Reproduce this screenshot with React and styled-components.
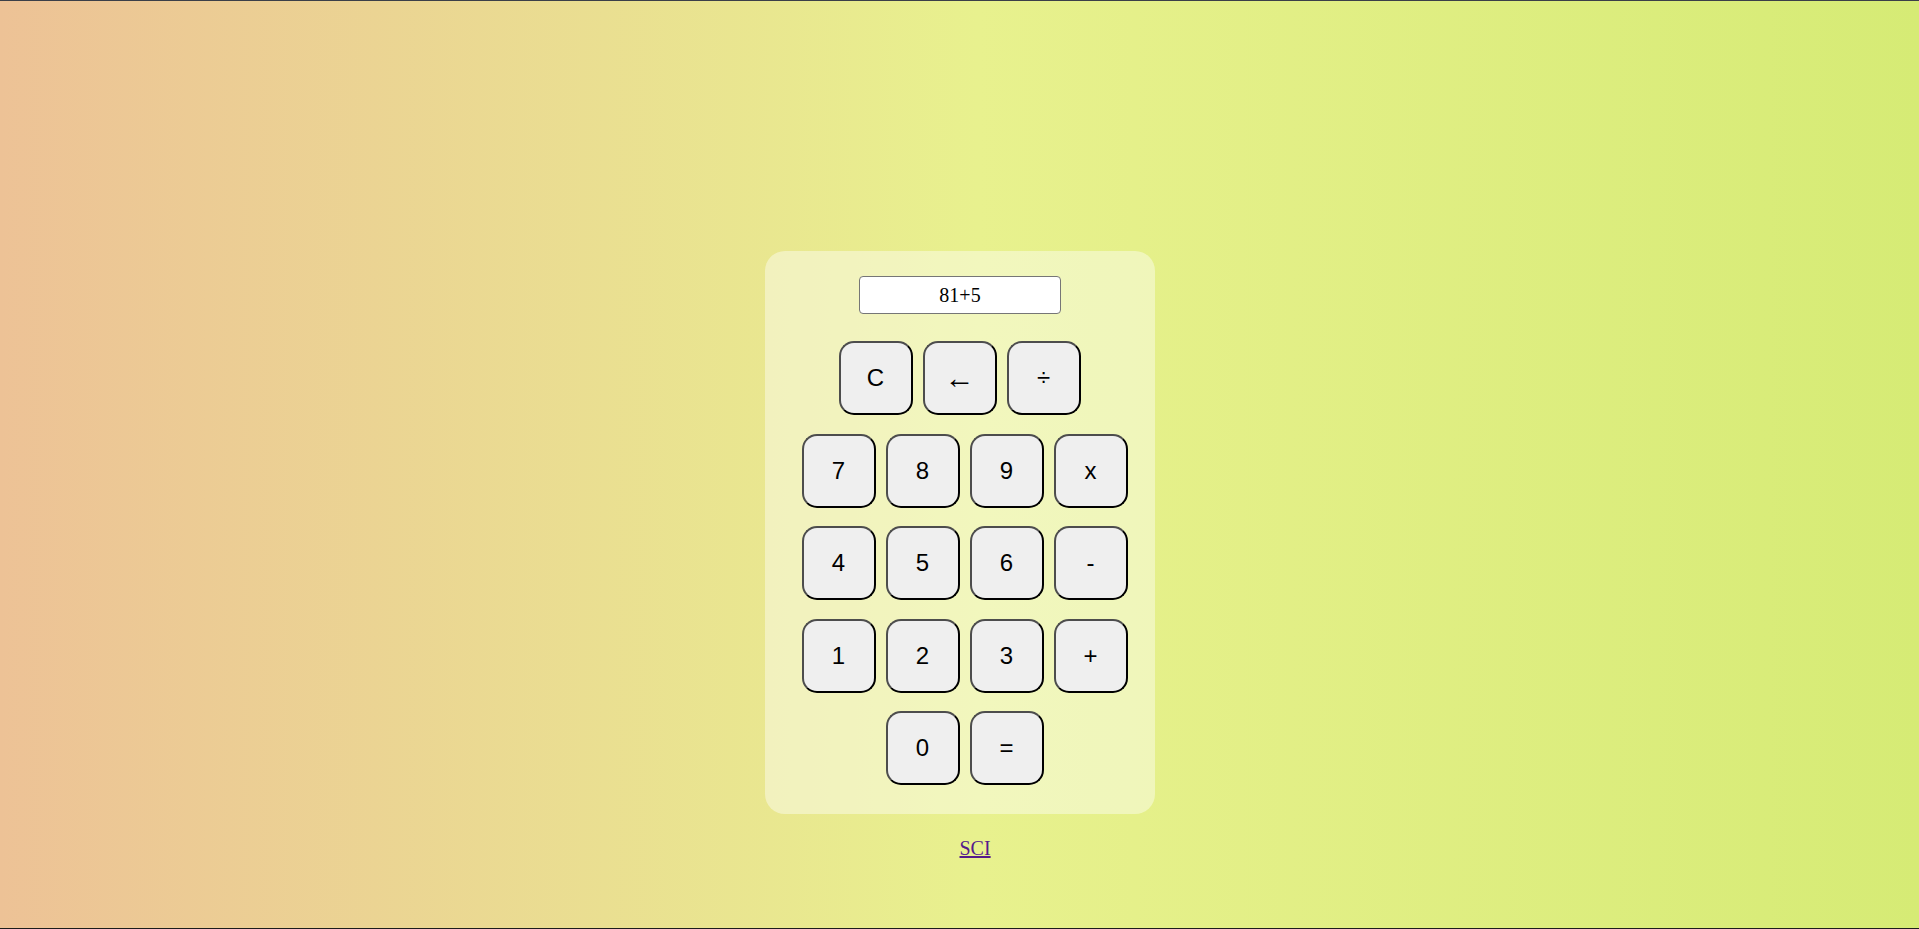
import React, { useState } from 'react'
import styled, { createGlobalStyle } from 'styled-components'

const GlobalStyle = createGlobalStyle`
  html, body {
    margin: 0;
    padding: 0;
  }
  body {
    font-family: "Liberation Serif", "Times New Roman", serif;
  }
`

const Page = styled.div`
  box-sizing: border-box;
  height: 929px;
  border-top: 1px solid #3b3f48;
  border-bottom: 1px solid #1c1c1c;
  padding-top: 250px;
  background: linear-gradient(to right, #edc296 0%, #e8f18e 51%, #d6eb75 100%);
`

const Panel = styled.div`
  box-sizing: border-box;
  width: 390px;
  margin: 0 auto;
  padding: 25px 0 29px;
  border-radius: 20px;
  background-color: rgba(255, 255, 255, 0.42);
  display: flex;
  flex-direction: column;
  align-items: center;
`

const Display = styled.input`
  box-sizing: border-box;
  width: 202px;
  height: 38px;
  margin: 0 0 27px 1px;
  border: 1px solid #767676;
  border-radius: 4px;
  background: #fff;
  text-align: center;
  font-family: "Liberation Serif", "Times New Roman", serif;
  font-size: 20px;
  color: #000;
  outline: none;
`

const Keys = styled.div`
  display: grid;
  grid-template-columns: repeat(${p => p.cols}, 74px);
  column-gap: 10px;
  row-gap: 18.5px;
  margin-left: ${p => p.shift || 0}px;
`

const TopRow = styled.div`
  display: flex;
  gap: 10px;
  margin-bottom: 18.5px;
`

const Key = styled.button`
  box-sizing: border-box;
  width: 74px;
  height: 74px;
  padding: 0;
  border-width: 2px;
  border-style: solid;
  border-color: #4d4d4d #000 #000 #4d4d4d;
  border-radius: 15px;
  background-color: #efefef;
  color: #000;
  font-family: ${p => (p.serif ? '"Liberation Serif", "Times New Roman", serif' : '"Liberation Sans", Arial, sans-serif')};
  font-size: ${p => (p.serif ? 30 : 24)}px;
  cursor: pointer;
  grid-column: ${p => p.col || 'auto'};
`

const Footer = styled.div`
  padding-left: 50%;
  margin-top: 23px;
  font-size: 20px;
`

const Link = styled.a`
  color: #551a8b;
  text-decoration: underline;
`

const grid = ['7', '8', '9', 'x', '4', '5', '6', '-', '1', '2', '3', '+']

export default function App() {
  const [expr, setExpr] = useState('81+5')

  const press = (k) => {
    if (k === 'C') return setExpr('')
    if (k === '←') return setExpr(expr.slice(0, -1))
    if (k === '=') {
      try {
        // eslint-disable-next-line no-new-func
        const v = Function('return (' + expr.replace(/x/g, '*').replace(/÷/g, '/') + ')')()
        setExpr(String(v))
      } catch (e) {
        setExpr('Error')
      }
      return
    }
    setExpr(expr + k)
  }

  return (
    <Page>
      <GlobalStyle />
      <Panel>
        <Display value={expr} onChange={e => setExpr(e.target.value)} />
        <TopRow>
          <Key onClick={() => press('C')}>C</Key>
          <Key serif onClick={() => press('←')}>←</Key>
          <Key onClick={() => press('÷')}>÷</Key>
        </TopRow>
        <Keys cols={4} shift={10}>
          {grid.map(k => (
            <Key key={k} onClick={() => press(k)}>{k}</Key>
          ))}
          <Key col={2} onClick={() => press('0')}>0</Key>
          <Key col={3} onClick={() => press('=')}>=</Key>
        </Keys>
      </Panel>
      <Footer>
        <Link href="#sci">SCI</Link>
      </Footer>
    </Page>
  )
}
